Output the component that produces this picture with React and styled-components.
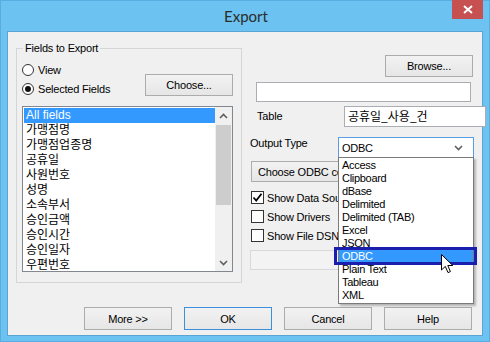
import React from 'react';
import styled, { createGlobalStyle } from 'styled-components';

const GlobalStyle = createGlobalStyle`
  html, body {
    margin: 0;
    padding: 0;
    background: #ffffff;
  }
  body {
    font-family: "Liberation Sans", Arial, "Noto Sans CJK KR", sans-serif;
    font-size: 11px;
    color: #000;
  }
  * {
    box-sizing: border-box;
  }
`;

const fields = [
    'All fields',
    '가맹점명',
    '가맹점업종명',
    '공휴일',
    '사원번호',
    '성명',
    '소속부서',
    '승인금액',
    '승인시간',
    '승인일자',
    '우편번호',
];

const outputTypes = [
    'Access',
    'Clipboard',
    'dBase',
    'Delimited',
    'Delimited (TAB)',
    'Excel',
    'JSON',
    'ODBC',
    'Plain Text',
    'Tableau',
    'XML',
];

const App = () => {
    return (
        <>
            <GlobalStyle />
            <Window>
                <TitleBar>
                    <span />
                    <Title>Export</Title>
                    <CloseButton>
                        <svg width="10" height="9" viewBox="0 0 10 9">
                            <path d="M1 1 L9 8 M9 1 L1 8" stroke="#fff" strokeWidth="2" />
                        </svg>
                    </CloseButton>
                </TitleBar>
                <Client>
                    <Body>
                        <LeftPane>
                            <GroupBox>
                                <Legend>Fields to Export</Legend>
                                <TopArea>
                                    <RadioGroup>
                                        <OptionRow>
                                            <Radio />
                                            <span>View</span>
                                        </OptionRow>
                                        <OptionRow>
                                            <Radio $checked />
                                            <span>Selected Fields</span>
                                        </OptionRow>
                                    </RadioGroup>
                                    <Button $w={88} $h={22} $top={14}>
                                        Choose...
                                    </Button>
                                </TopArea>
                                <ListBox>
                                    <ListItems>
                                        {fields.map((f, i) => (
                                            <ListItem key={f} $selected={i === 0}>
                                                {f}
                                            </ListItem>
                                        ))}
                                    </ListItems>
                                    <ScrollBar>
                                        <ScrollArrow>
                                            <svg width="9" height="6" viewBox="0 0 9 6">
                                                <path d="M1 5 L4.5 1.5 L8 5" fill="none" stroke="#606060" strokeWidth="1.6" />
                                            </svg>
                                        </ScrollArrow>
                                        <ScrollTrack>
                                            <Thumb />
                                        </ScrollTrack>
                                        <ScrollArrow>
                                            <svg width="9" height="6" viewBox="0 0 9 6">
                                                <path d="M1 1 L4.5 4.5 L8 1" fill="none" stroke="#606060" strokeWidth="1.6" />
                                            </svg>
                                        </ScrollArrow>
                                    </ScrollBar>
                                </ListBox>
                            </GroupBox>
                        </LeftPane>
                        <RightPane>
                            <BrowseRow>
                                <Button $w={88} $h={22}>
                                    Browse...
                                </Button>
                            </BrowseRow>
                            <TextBox $w={215} $h={20} $left={14} $top={5} />
                            <FieldRow $top={4}>
                                <Label $left={15}>Table</Label>
                                <TextBox $w={142} $h={21} $left={329 - 242} $korean>
                                    공휴일_사용_건
                                </TextBox>
                            </FieldRow>
                            <FieldRow $top={10} $align="flex-start">
                                <Label $left={8}>Output Type</Label>
                                <SelectWrap>
                                    <Select>
                                        <span>ODBC</span>
                                        <svg width="9" height="6" viewBox="0 0 9 6">
                                            <path d="M1 1 L4.5 4.5 L8 1" fill="none" stroke="#606060" strokeWidth="1.6" />
                                        </svg>
                                    </Select>
                                    <DropList>
                                        {outputTypes.map((t) => (
                                            <DropItem key={t} $active={t === 'ODBC'}>
                                                {t}
                                                {t === 'ODBC' && (
                                                    <>
                                                        <Marker />
                                                        <Cursor>
                                                            <svg width="13" height="20" viewBox="0 0 13 20">
                                                                <path
                                                                    d="M0.5 0.5 L0.5 16 L4.3 12.4 L7 18.6 L9.4 17.6 L6.8 11.5 L11.8 11.5 Z"
                                                                    fill="#fff"
                                                                    stroke="#000"
                                                                    strokeWidth="1"
                                                                />
                                                            </svg>
                                                        </Cursor>
                                                    </>
                                                )}
                                            </DropItem>
                                        ))}
                                    </DropList>
                                </SelectWrap>
                            </FieldRow>
                            <Button $w={220} $h={21} $left={9} $top={3} $alignText="left">
                                Choose ODBC connection...
                            </Button>
                            <CheckList>
                                <OptionRow>
                                    <CheckBox>
                                        <svg width="11" height="11" viewBox="0 0 11 11">
                                            <path d="M1.5 5.5 L4.2 8.5 L9.5 1.8" fill="none" stroke="#000" strokeWidth="1.8" />
                                        </svg>
                                    </CheckBox>
                                    <span>Show Data Source</span>
                                </OptionRow>
                                <OptionRow>
                                    <CheckBox />
                                    <span>Show Drivers</span>
                                </OptionRow>
                                <OptionRow>
                                    <CheckBox />
                                    <span>Show File DSN</span>
                                </OptionRow>
                            </CheckList>
                            <DisabledBox />
                        </RightPane>
                    </Body>
                    <ButtonRow>
                        <Button $w={88} $h={23}>More &gt;&gt;</Button>
                        <Button $w={88} $h={23} $default>OK</Button>
                        <Button $w={88} $h={23}>Cancel</Button>
                        <Button $w={88} $h={23}>Help</Button>
                    </ButtonRow>
                </Client>
            </Window>
        </>
    );
};

const Window = styled.div`
    width: 490px;
    height: 342px;
    display: flex;
    flex-direction: column;
    background: #6cc2f0;
    border: 1px solid #58ade3;
`;

const TitleBar = styled.div`
    height: 30px;
    flex: none;
    display: grid;
    grid-template-columns: 1fr auto 1fr;
`;

const Title = styled.div`
    font-family: Lato, "Noto Sans", sans-serif;
    font-size: 15px;
    line-height: 30px;
    color: #2b2b2b;
    padding-left: 2px;
`;

const CloseButton = styled.div`
    justify-self: end;
    align-self: start;
    width: 31px;
    height: 19px;
    margin-right: 6px;
    margin-top: -1px;
    background: #c75050;
    display: flex;
    align-items: center;
    justify-content: center;
`;

const Client = styled.div`
    flex: 1;
    margin: 0 6px 5px 6px;
    background: #f0f0f0;
    border: 1px solid #5aa4d4;
    display: flex;
    flex-direction: column;
`;

const Body = styled.div`
    flex: 1;
    display: flex;
`;

const LeftPane = styled.div`
    width: 234px;
    padding: 9px 0 0 8px;
`;

const GroupBox = styled.fieldset`
    margin: 0;
    width: 226px;
    border: 1px solid #d5d5d5;
    padding: 5px 8px 10px 5px;
    min-width: 0;
`;

const Legend = styled.legend`
    padding: 0 2px;
    margin-left: 1px;
    line-height: 14px;
    letter-spacing: -0.2px;
`;

const TopArea = styled.div`
    display: flex;
    justify-content: space-between;
    align-items: flex-start;
`;

const RadioGroup = styled.div`
    display: flex;
    flex-direction: column;
`;

const OptionRow = styled.div`
    height: 19px;
    display: flex;
    align-items: center;
    gap: 4px;
    letter-spacing: -0.2px;
    white-space: nowrap;
`;

const Radio = styled.span`
    width: 12px;
    height: 12px;
    border-radius: 50%;
    border: 1px solid #333;
    background: #fff;
    display: flex;
    align-items: center;
    justify-content: center;
    &::after {
        content: '';
        width: 6px;
        height: 6px;
        border-radius: 50%;
        background: ${(p) => (p.$checked ? '#111' : 'transparent')};
    }
`;

const Button = styled.div`
    width: ${(p) => p.$w}px;
    height: ${(p) => p.$h}px;
    margin-top: ${(p) => p.$top || 0}px;
    margin-left: ${(p) => p.$left || 0}px;
    flex: none;
    border: 1px solid ${(p) => (p.$default ? '#3c8fdb' : '#acacac')};
    background: linear-gradient(#f2f2f2, #e6e6e6);
    display: flex;
    align-items: center;
    justify-content: ${(p) => (p.$alignText === 'left' ? 'flex-start' : 'center')};
    padding: 0 6px;
    letter-spacing: -0.2px;
    white-space: nowrap;
    overflow: hidden;
`;

const ListBox = styled.div`
    margin-top: 8px;
    width: 211px;
    height: 166px;
    border: 1px solid #828790;
    background: #fff;
    display: flex;
`;

const ListItems = styled.div`
    flex: 1;
    padding: 1px 0 0 1px;
    overflow: hidden;
`;

const ListItem = styled.div`
    height: 15px;
    line-height: 15px;
    font-size: 12px;
    padding-left: 2px;
    font-family: "Liberation Sans", "Noto Sans CJK KR", sans-serif;
    background: ${(p) => (p.$selected ? '#3399ff' : 'transparent')};
    color: ${(p) => (p.$selected ? '#fff' : '#000')};
    white-space: nowrap;
`;

const ScrollBar = styled.div`
    width: 17px;
    display: flex;
    flex-direction: column;
    background: #f0f0f0;
`;

const ScrollArrow = styled.div`
    height: 17px;
    display: flex;
    align-items: center;
    justify-content: center;
`;

const ScrollTrack = styled.div`
    flex: 1;
    padding: 1px 1px 0 1px;
`;

const Thumb = styled.div`
    height: 80px;
    background: #cdcdcd;
`;

const RightPane = styled.div`
    flex: 1;
    display: flex;
    flex-direction: column;
`;

const BrowseRow = styled.div`
    margin-top: 23px;
    display: flex;
    justify-content: flex-end;
    padding-right: 13px;
`;

const TextBox = styled.div`
    width: ${(p) => p.$w}px;
    height: ${(p) => p.$h}px;
    margin-left: ${(p) => p.$left || 0}px;
    margin-top: ${(p) => p.$top || 0}px;
    flex: none;
    border: 1px solid #abadb3;
    background: #fff;
    font-size: 12px;
    line-height: 18px;
    padding-left: 3px;
    font-family: ${(p) => (p.$korean ? '"Noto Sans CJK KR", "Liberation Sans", sans-serif' : 'inherit')};
    white-space: nowrap;
`;

const FieldRow = styled.div`
    margin-top: ${(p) => p.$top}px;
    display: flex;
    align-items: ${(p) => p.$align || 'center'};
`;

const Label = styled.span`
    margin-left: ${(p) => p.$left}px;
    line-height: 13px;
    letter-spacing: -0.2px;
    white-space: nowrap;
    width: 0;
`;

const SelectWrap = styled.div`
    position: relative;
    margin-left: ${338 - 242 - 8}px;
    width: 136px;
`;

const Select = styled.div`
    height: 21px;
    border: 1px solid #569de5;
    background: #fff;
    display: flex;
    align-items: center;
    justify-content: space-between;
    padding: 0 10px 0 3px;
    letter-spacing: -0.3px;
`;

const DropList = styled.div`
    position: absolute;
    top: 20px;
    left: 0;
    width: 136px;
    border: 1px solid #7a7a7a;
    background: #fff;
    padding: 1px 0;
    box-shadow: 2px 2px 2px rgba(0, 0, 0, 0.25);
    z-index: 2;
`;

const DropItem = styled.div`
    position: relative;
    height: 13px;
    line-height: 13px;
    padding-left: 3px;
    letter-spacing: -0.3px;
    white-space: nowrap;
    background: ${(p) => (p.$active ? '#3399ff' : 'transparent')};
    color: ${(p) => (p.$active ? '#fff' : '#000')};
`;

const Marker = styled.span`
    position: absolute;
    top: -3px;
    bottom: -2px;
    left: -5px;
    right: -4px;
    border: 3px solid #1a1fae;
`;

const Cursor = styled.span`
    position: absolute;
    left: 102px;
    top: 4px;
    width: 13px;
    height: 20px;
    line-height: 0;
`;

const CheckList = styled.div`
    margin-top: 6px;
    padding-left: 9px;
    display: flex;
    flex-direction: column;
`;

const CheckBox = styled.span`
    width: 13px;
    height: 13px;
    border: 1px solid #333;
    background: #fff;
    display: flex;
    align-items: center;
    justify-content: center;
    margin-right: -1px;
`;

const DisabledBox = styled.div`
    margin: 5px 0 0 8px;
    width: 221px;
    height: 20px;
    border: 1px solid #d9d9d9;
    background: #f3f3f3;
`;

const ButtonRow = styled.div`
    height: 23px;
    margin-bottom: 5px;
    padding-left: 76px;
    display: flex;
    gap: 12px;
`;

export default App;
